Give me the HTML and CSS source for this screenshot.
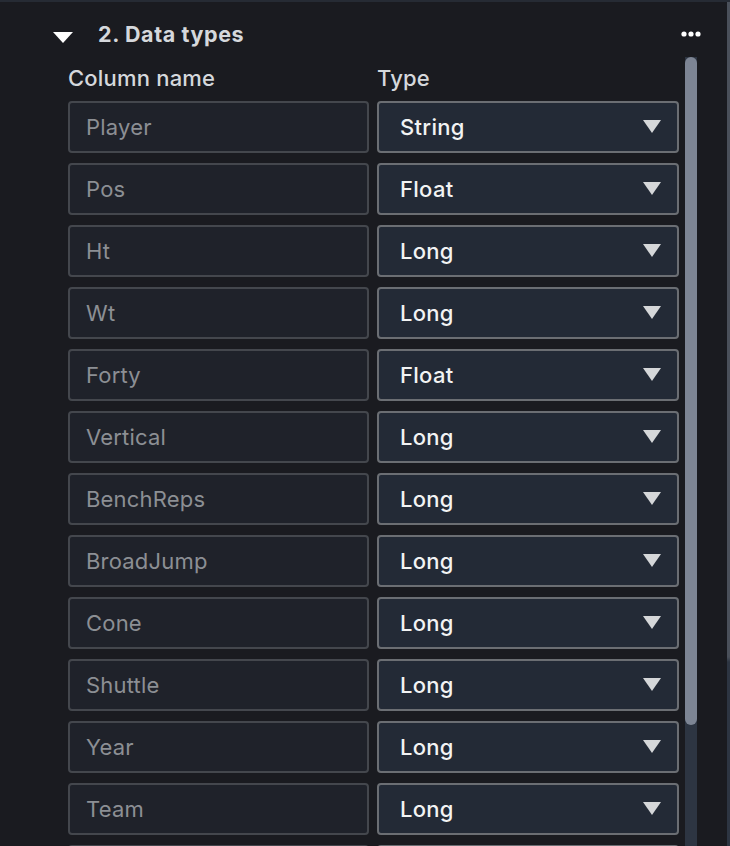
FILE: index.html
```html
<!DOCTYPE html>
<html>
<head>
<meta charset="utf-8">
<link rel="stylesheet" href="styles.css">
</head>
<body>
<div class="frame">
  <div class="panel">
    <div class="header">
      <svg class="caret" width="20" height="12" viewBox="0 0 20 12"><path d="M0 0 H20 L10 11 Z" fill="#ffffff"/></svg>
      <h2 class="title">2. Data types</h2>
      <svg class="dots" width="20" height="6" viewBox="0 0 20 6"><circle cx="3" cy="3" r="2.6" fill="#fff"/><circle cx="10" cy="3" r="2.6" fill="#fff"/><circle cx="17" cy="3" r="2.6" fill="#fff"/></svg>
    </div>
    <div class="labels">
      <span class="label">Column name</span>
      <span class="label">Type</span>
    </div>
    <div class="rows">
      <div class="name">Player</div><div class="type">String<svg class="arrow" width="18" height="13" viewBox="0 0 18 13"><path d="M0 0 H18 L9 13 Z" fill="#d5d7d9"/></svg></div>
      <div class="name">Pos</div><div class="type">Float<svg class="arrow" width="18" height="13" viewBox="0 0 18 13"><path d="M0 0 H18 L9 13 Z" fill="#d5d7d9"/></svg></div>
      <div class="name">Ht</div><div class="type">Long<svg class="arrow" width="18" height="13" viewBox="0 0 18 13"><path d="M0 0 H18 L9 13 Z" fill="#d5d7d9"/></svg></div>
      <div class="name">Wt</div><div class="type">Long<svg class="arrow" width="18" height="13" viewBox="0 0 18 13"><path d="M0 0 H18 L9 13 Z" fill="#d5d7d9"/></svg></div>
      <div class="name">Forty</div><div class="type">Float<svg class="arrow" width="18" height="13" viewBox="0 0 18 13"><path d="M0 0 H18 L9 13 Z" fill="#d5d7d9"/></svg></div>
      <div class="name">Vertical</div><div class="type">Long<svg class="arrow" width="18" height="13" viewBox="0 0 18 13"><path d="M0 0 H18 L9 13 Z" fill="#d5d7d9"/></svg></div>
      <div class="name">BenchReps</div><div class="type">Long<svg class="arrow" width="18" height="13" viewBox="0 0 18 13"><path d="M0 0 H18 L9 13 Z" fill="#d5d7d9"/></svg></div>
      <div class="name">BroadJump</div><div class="type">Long<svg class="arrow" width="18" height="13" viewBox="0 0 18 13"><path d="M0 0 H18 L9 13 Z" fill="#d5d7d9"/></svg></div>
      <div class="name">Cone</div><div class="type">Long<svg class="arrow" width="18" height="13" viewBox="0 0 18 13"><path d="M0 0 H18 L9 13 Z" fill="#d5d7d9"/></svg></div>
      <div class="name">Shuttle</div><div class="type">Long<svg class="arrow" width="18" height="13" viewBox="0 0 18 13"><path d="M0 0 H18 L9 13 Z" fill="#d5d7d9"/></svg></div>
      <div class="name">Year</div><div class="type">Long<svg class="arrow" width="18" height="13" viewBox="0 0 18 13"><path d="M0 0 H18 L9 13 Z" fill="#d5d7d9"/></svg></div>
      <div class="name">Team</div><div class="type">Long<svg class="arrow" width="18" height="13" viewBox="0 0 18 13"><path d="M0 0 H18 L9 13 Z" fill="#d5d7d9"/></svg></div>
      <div class="name"></div><div class="type"></div>
    </div>
    <div class="scrolltrack"><div class="thumb"></div></div>
  </div>
  <div class="edge"></div>
</div>
</body>
</html>
```
FILE: styles.css
```css
html, body {
  margin: 0;
  padding: 0;
  background: #1a1b20;
  height: 846px;
  overflow: hidden;
}
body {
  font-family: Inter, "Open Sans", sans-serif;
}
.frame {
  position: relative;
  height: 846px;
  border-top: 2px solid #262b34;
  box-sizing: border-box;
  overflow: hidden;
}
.panel {
  position: relative;
  height: 100%;
  padding: 0 52px 0 68px;
  box-sizing: border-box;
}
.header {
  display: flex;
  align-items: center;
  height: 64px;
  margin-left: -15px;
  margin-right: -23px;
}
.caret {
  margin-right: 25px;
  margin-top: 7px;
}
.title {
  margin: 0;
  font-size: 21.5px;
  font-weight: 700;
  color: #d5d8dc;
  flex: 1;
  letter-spacing: 0.6px;
}
.labels {
  display: grid;
  grid-template-columns: 301px 301px;
  column-gap: 9px;
}
.label {
  font-size: 22px;
  color: #d5d8dc;
  font-weight: 500;
  line-height: 24px;
  letter-spacing: 0.2px;
}
.label + .label {
  margin-left: -1px;
}
.rows {
  display: grid;
  grid-template-columns: 301px 301px;
  column-gap: 9px;
  row-gap: 10px;
  margin-top: 11px;
}
.name, .type {
  height: 52px;
  box-sizing: border-box;
  border-radius: 4px;
  display: flex;
  align-items: center;
  font-size: 22px;
}
.name {
  background: #1f222a;
  border: 2px solid #44474d;
  color: #8c8f94;
  padding-left: 16px;
  letter-spacing: 0.2px;
}
.type {
  background: #232a36;
  border: 2px solid #6b6e73;
  color: #f2f3f3;
  font-weight: 500;
  padding: 0 16px 0 21px;
  justify-content: space-between;
  margin-left: -1px;
  letter-spacing: 0.3px;
}
.arrow {
  margin-top: -2px;
}
.scrolltrack {
  position: absolute;
  left: 685px;
  top: 55px;
  width: 12px;
  bottom: 0;
  background: #2d3542;
}
.thumb {
  height: 668px;
  background: #7d8594;
  border-radius: 6px;
}
.edge {
  position: absolute;
  right: 0;
  top: 0;
  width: 3px;
  height: 100%;
  background: linear-gradient(#4a505a 0, #4a505a 655px, #2d3542 660px);
}
```
